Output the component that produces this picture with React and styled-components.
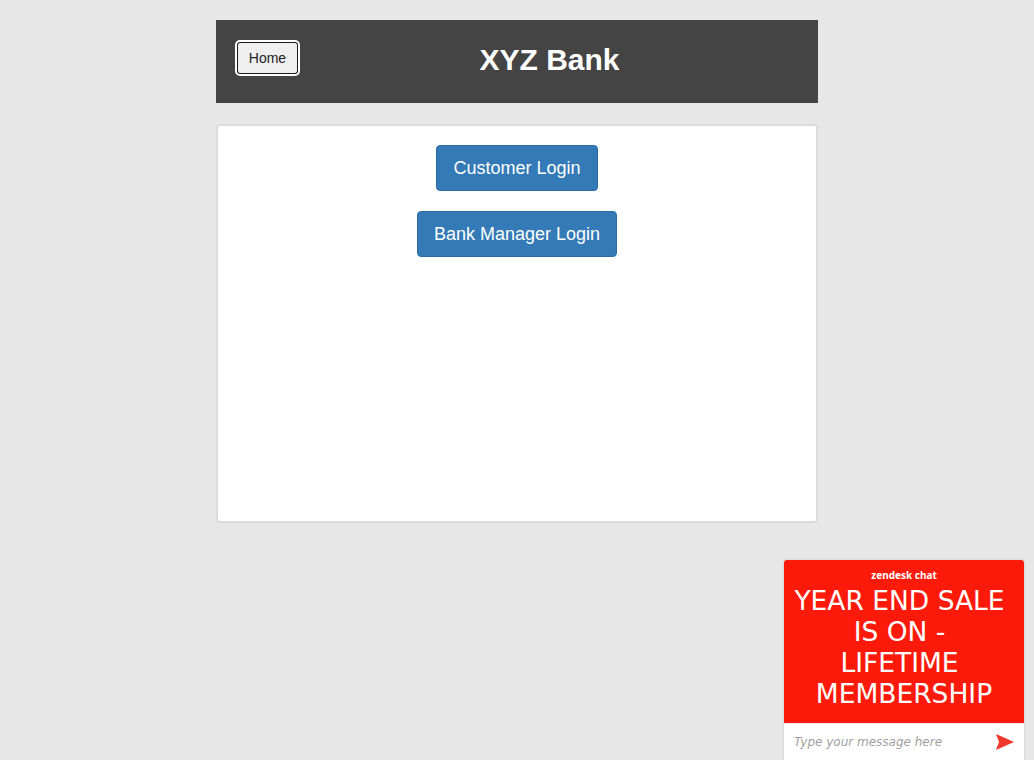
import React from 'react';
import styled, { createGlobalStyle } from 'styled-components';

const GlobalStyle = createGlobalStyle`
  html, body {
    margin: 0;
    padding: 0;
    background: #e7e7e7;
    font-family: "Liberation Sans", Arial, sans-serif;
  }
`;

const Page = styled.div`
  width: 602px;
  margin: 0 auto;
  padding-top: 20px;
  display: flex;
  flex-direction: column;
  gap: 21px;
`;

const Header = styled.header`
  height: 83px;
  background: #444444;
  display: flex;
  align-items: center;
  padding: 0 0 0 20px;
  box-sizing: border-box;
`;

const HomeButton = styled.button`
  width: 63px;
  height: 34px;
  margin-top: -8px;
  background: #efefef;
  border: 2px solid #1a1a1a;
  outline: 2px solid #ffffff;
  outline-offset: -1px;
  border-radius: 4px;
  font-family: "Liberation Sans", Arial, sans-serif;
  font-size: 14px;
  color: #222;
  cursor: pointer;
`;

const Title = styled.h1`
  flex: 1;
  margin: -4px 18px 0 0;
  text-align: center;
  color: #ffffff;
  font-size: 30px;
  font-weight: bold;
`;

const Card = styled.main`
  height: 399px;
  box-sizing: border-box;
  background: #ffffff;
  border: 2px solid #dcdcdc;
  border-radius: 4px;
  padding-top: 19px;
  display: flex;
  flex-direction: column;
  align-items: center;
  gap: 20px;
`;

const LoginButton = styled.button`
  height: 46px;
  padding: 0 16px;
  background: #337ab7;
  border: 1px solid #2e6da4;
  border-radius: 4px;
  color: #ffffff;
  font-family: "Liberation Sans", Arial, sans-serif;
  font-size: 18px;
  cursor: pointer;
`;

const Chat = styled.div`
  position: fixed;
  right: 10px;
  bottom: 0;
  width: 240px;
  height: 200px;
  display: flex;
  flex-direction: column;
  border-radius: 3px 3px 0 0;
  overflow: hidden;
  box-shadow: 0 0 3px rgba(0, 0, 0, 0.15);
`;

const ChatBanner = styled.div`
  flex: 1;
  background: #fe1a0a;
  color: #ffffff;
  text-align: center;
  padding-top: 8px;
`;

const Brand = styled.div`
  font-family: "Noto Sans", sans-serif;
  font-size: 10px;
  font-weight: bold;
  line-height: 14px;
  margin-bottom: 3px;
`;

const Promo = styled.div`
  font-family: "DejaVu Sans", Verdana, sans-serif;
  font-size: 26.5px;
  line-height: 31px;
  white-space: nowrap;
`;

const PromoLine = styled.span`
  display: block;
  padding-right: ${p => (p.$trail ? '9px' : '0')};
`;

const ChatInput = styled.div`
  height: 36px;
  background: #ffffff;
  display: flex;
  align-items: center;
  justify-content: space-between;
  padding: 0 10px;
  border-top: 1px solid #eee;
`;

const Placeholder = styled.span`
  font-family: "DejaVu Sans", Verdana, sans-serif;
  font-style: italic;
  font-size: 12px;
  color: #a0a0a0;
`;

export default function App() {
  return (
    <>
      <GlobalStyle />
      <Page>
        <Header>
          <HomeButton>Home</HomeButton>
          <Title>XYZ Bank</Title>
        </Header>
        <Card>
          <LoginButton>Customer Login</LoginButton>
          <LoginButton>Bank Manager Login</LoginButton>
        </Card>
      </Page>
      <Chat>
        <ChatBanner>
          <Brand>zendesk chat</Brand>
          <Promo>
            <PromoLine $trail>YEAR END SALE</PromoLine>
            <PromoLine $trail>IS ON -</PromoLine>
            <PromoLine $trail>LIFETIME</PromoLine>
            <PromoLine>MEMBERSHIP</PromoLine>
          </Promo>
        </ChatBanner>
        <ChatInput>
          <Placeholder>Type your message here</Placeholder>
          <svg width="18" height="16" viewBox="0 0 18 16">
            <path d="M0 0 L18 8 L0 16 L3 8 Z" fill="#f0392c" />
          </svg>
        </ChatInput>
      </Chat>
    </>
  );
}
